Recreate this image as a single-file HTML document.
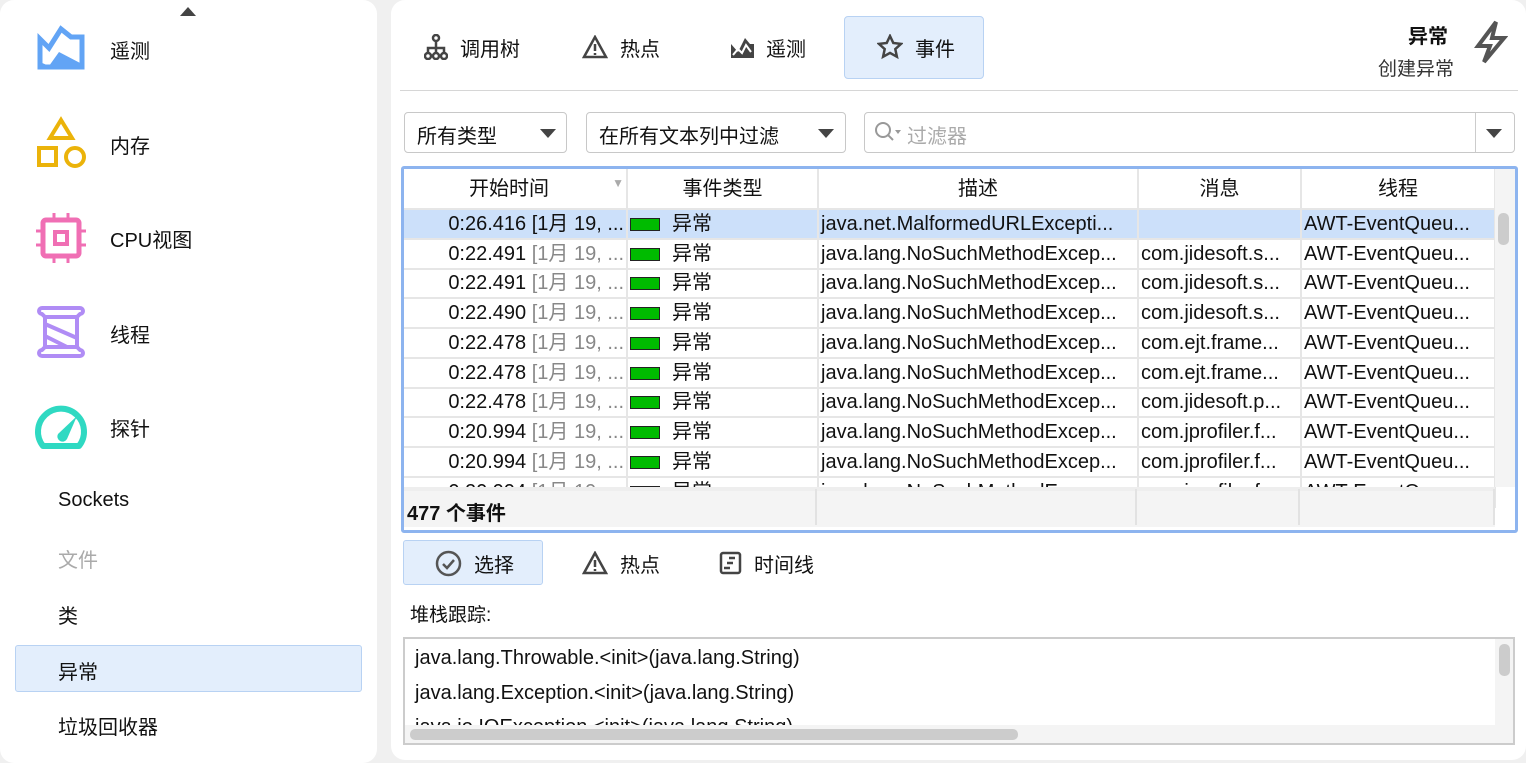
<!DOCTYPE html>
<html><head><meta charset="utf-8"><style>
*{box-sizing:border-box;margin:0;padding:0}
body{width:1526px;height:763px;background:#f0f0f0;font-family:"Liberation Sans","Noto Sans CJK SC",sans-serif;color:#111;position:relative;overflow:hidden;font-size:20px}
.abs{position:absolute}
.panel{position:absolute;background:#fff;border-radius:14px}
.nav{position:absolute;left:110px;font-size:20px}
.sub{position:absolute;left:58px;font-size:20px}
.tab{position:absolute;top:16px;height:62px;display:flex;align-items:center;font-size:20px}
.tab svg{margin-right:12px}
.dd{position:absolute;top:112px;height:41px;border:1px solid #c8c8c8;border-radius:4px;background:#fff;font-size:20px;padding:7px 12px}
.tri{position:absolute;width:0;height:0;border-left:8px solid transparent;border-right:8px solid transparent;border-top:9px solid #444}
table{border-collapse:collapse;table-layout:fixed;font-size:20px}
td{height:29.75px;border-right:2px solid #e6e6e6;border-bottom:2px solid #e6e6e6;white-space:nowrap;overflow:hidden;padding:0 2px;line-height:26px}
.g{color:#888}
.bar{display:inline-block;width:30px;height:13px;background:#00bb00;border:1px solid #222;vertical-align:-1px;margin-right:12px}
</style></head><body>
<div class="panel" style="left:0;top:0;width:377px;height:763px"></div>
<div class="panel" style="left:391px;top:0;width:1135px;height:760px"></div>

<div class="tri" style="left:180px;top:7px;border-top:none;border-bottom:9px solid #444"></div>
<svg class="abs" style="left:37px;top:24px" width="48" height="46"><path d="M3 15L12 24L24 5L34 13H45V43H3Z" fill="none" stroke="#62a4f5" stroke-width="5" stroke-linejoin="miter"/><path d="M3 38L12 42L22 28L45 40V45H3Z" fill="#62a4f5"/></svg>
<div class="nav" style="top:35px">遥测</div>
<svg class="abs" style="left:36px;top:116px" width="52" height="54" fill="none" stroke="#ebb30a" stroke-width="4"><path d="M25 4l11 18H14z"/><rect x="3" y="32" width="17" height="17"/><circle cx="39" cy="41" r="9"/></svg>
<div class="nav" style="top:130px">内存</div>
<svg class="abs" style="left:36px;top:213px" width="50" height="50" fill="none" stroke="#f06fb4" stroke-width="5"><rect x="7" y="7" width="36" height="36" rx="3"/><rect x="19" y="19" width="12" height="12" stroke-width="4"/><path d="M18 0v7M32 0v7M18 43v7M32 43v7M0 18h7M0 32h7M43 18h7M43 32h7" stroke-width="3"/></svg>
<div class="nav" style="top:224px">CPU视图</div>
<svg class="abs" style="left:37px;top:305px" width="48" height="54" fill="none" stroke="#b08cf5" stroke-width="4" stroke-linejoin="round"><path d="M5 3h38a3 3 0 0 1 0 6l-3 3v30l3 3a3 3 0 0 1 0 6H5a3 3 0 0 1 0-6l3-3V12L5 9a3 3 0 0 1 0-6z"/><path d="M8 12h32M8 42h32M8 19l32 14M8 31l22 11"/></svg>
<div class="nav" style="top:319px">线程</div>
<svg class="abs" style="left:34px;top:404px" width="54" height="45"><path d="M9 42A23 23 0 1 1 45 42Z" fill="none" stroke="#2fd9c2" stroke-width="6" stroke-linejoin="round"/><path d="M43 12L33 35a5 5 0 0 1-9-5z" fill="#2fd9c2"/></svg>
<div class="nav" style="top:413px">探针</div>
<div class="sub" style="top:489px">Sockets</div>
<div class="sub" style="top:544px;color:#aaa">文件</div>
<div class="sub" style="top:600px">类</div>
<div class="abs" style="left:15px;top:645px;width:347px;height:47px;background:#e3eefc;border:1px solid #b8d2f3;border-radius:3px"></div>
<div class="sub" style="top:656px">异常</div>
<div class="sub" style="top:711px">垃圾回收器</div>

<!-- tabs -->
<div class="tab" style="left:424px"><svg width="24" height="26" fill="none" stroke="#444" stroke-width="2.5"><circle cx="12" cy="4" r="3"/><path d="M12 7v7M4 20v-6h16v6M12 14v6"/><circle cx="4" cy="22" r="3"/><circle cx="12" cy="22" r="3"/><circle cx="20" cy="22" r="3"/></svg>调用树</div>
<div class="tab" style="left:582px"><svg width="26" height="24" fill="none" stroke="#444" stroke-width="2.5"><path d="M13 2L2 22h22z"/><path d="M13 9v7M13 18v2"/></svg>热点</div>
<div class="tab" style="left:730px"><svg width="24" height="22"><path d="M1 22V8l7 8 7-14 5 6h4v14z" fill="#444"/><path d="M3 19l5-6 4 4 4-8 5 7" fill="none" stroke="#fff" stroke-width="2"/></svg>遥测</div>
<div class="abs" style="left:844px;top:16px;width:140px;height:63px;background:#e3eefc;border:1px solid #b8d2f3;border-radius:4px"></div>
<div class="tab" style="left:877px"><svg width="26" height="26" fill="none" stroke="#444" stroke-width="2.5"><path d="M13 2l3.3 7 7.7.9-5.7 5.2 1.6 7.6L13 18.9l-6.9 3.8 1.6-7.6L2 9.9l7.7-.9z"/></svg>事件</div>
<div class="abs" style="left:1408px;top:20px;font-weight:bold;font-size:20px">异常</div>
<div class="abs" style="left:1378px;top:54px;font-size:19px;color:#333">创建异常</div>
<svg class="abs" style="left:1474px;top:20px" width="34" height="44" fill="none" stroke="#555" stroke-width="4" stroke-linejoin="miter"><path d="M22 2L4 26h12l-6 16 20-24H18z"/></svg>
<div class="abs" style="left:400px;top:90px;width:1118px;height:1px;background:#d6d6d6"></div>

<!-- filters -->
<div class="dd" style="left:404px;width:163px">所有类型</div><div class="tri" style="left:540px;top:129px"></div>
<div class="dd" style="left:586px;width:260px">在所有文本列中过滤</div><div class="tri" style="left:818px;top:129px"></div>
<div class="dd" style="left:864px;width:651px;color:#aaa;padding-left:42px">过滤器</div>
<svg class="abs" style="left:874px;top:121px" width="30" height="22" fill="none" stroke="#999" stroke-width="2"><circle cx="9" cy="9" r="7"/><path d="M14 14l5 5"/><path d="M21 9h6l-3 4z" fill="#999" stroke="none"/></svg>
<div class="abs" style="left:1475px;top:113px;width:1px;height:39px;background:#ccc"></div>
<div class="tri" style="left:1486px;top:129px"></div>

<!-- table -->
<div class="abs" style="left:401px;top:166px;width:1117px;height:367px;border:3px solid #8db4ef;border-radius:3px;background:#fff;overflow:hidden">
<table style="width:1091px">
<colgroup><col style="width:223px"><col style="width:191px"><col style="width:320px"><col style="width:163px"><col style="width:194px"></colgroup>
<tr style="text-align:center"><td style="height:40px">开始时间<span style="float:right;color:#aaa;font-size:12px;margin-top:-6px">▼</span></td><td>事件类型</td><td>描述</td><td>消息</td><td>线程</td></tr>
<tr style="background:#cce0fa"><td style="text-align:right">0:26.416 [1月 19, ...</td><td><span class="bar"></span>异常</td><td>java.net.MalformedURLExcepti...</td><td></td><td>AWT-EventQueu...</td></tr>
<tr><td style="text-align:right">0:22.491 <span class="g">[1月 19, ...</span></td><td><span class="bar"></span>异常</td><td>java.lang.NoSuchMethodExcep...</td><td>com.jidesoft.s...</td><td>AWT-EventQueu...</td></tr>
<tr><td style="text-align:right">0:22.491 <span class="g">[1月 19, ...</span></td><td><span class="bar"></span>异常</td><td>java.lang.NoSuchMethodExcep...</td><td>com.jidesoft.s...</td><td>AWT-EventQueu...</td></tr>
<tr><td style="text-align:right">0:22.490 <span class="g">[1月 19, ...</span></td><td><span class="bar"></span>异常</td><td>java.lang.NoSuchMethodExcep...</td><td>com.jidesoft.s...</td><td>AWT-EventQueu...</td></tr>
<tr><td style="text-align:right">0:22.478 <span class="g">[1月 19, ...</span></td><td><span class="bar"></span>异常</td><td>java.lang.NoSuchMethodExcep...</td><td>com.ejt.frame...</td><td>AWT-EventQueu...</td></tr>
<tr><td style="text-align:right">0:22.478 <span class="g">[1月 19, ...</span></td><td><span class="bar"></span>异常</td><td>java.lang.NoSuchMethodExcep...</td><td>com.ejt.frame...</td><td>AWT-EventQueu...</td></tr>
<tr><td style="text-align:right">0:22.478 <span class="g">[1月 19, ...</span></td><td><span class="bar"></span>异常</td><td>java.lang.NoSuchMethodExcep...</td><td>com.jidesoft.p...</td><td>AWT-EventQueu...</td></tr>
<tr><td style="text-align:right">0:20.994 <span class="g">[1月 19, ...</span></td><td><span class="bar"></span>异常</td><td>java.lang.NoSuchMethodExcep...</td><td>com.jprofiler.f...</td><td>AWT-EventQueu...</td></tr>
<tr><td style="text-align:right">0:20.994 <span class="g">[1月 19, ...</span></td><td><span class="bar"></span>异常</td><td>java.lang.NoSuchMethodExcep...</td><td>com.jprofiler.f...</td><td>AWT-EventQueu...</td></tr>
<tr><td style="text-align:right">0:20.994 <span class="g">[1月 19, ...</span></td><td><span class="bar"></span>异常</td><td>java.lang.NoSuchMethodExcep...</td><td>com.jprofiler.f...</td><td>AWT-EventQueu...</td></tr>
</table>
<div class="abs" style="left:0;top:318px;width:1091px;height:40px;background:#f4f4f4;border-top:4px solid #eee"></div>
<div class="abs" style="left:3px;top:328px;font-weight:bold;font-size:20px">477 个事件</div>
<div class="abs" style="left:411px;top:320px;width:2px;height:36px;background:#e2e2e2"></div>
<div class="abs" style="left:731px;top:320px;width:2px;height:36px;background:#e2e2e2"></div>
<div class="abs" style="left:894px;top:320px;width:2px;height:36px;background:#e2e2e2"></div>
<div class="abs" style="left:1089px;top:320px;width:2px;height:36px;background:#e2e2e2"></div>
<div class="abs" style="left:1091px;top:0;width:20px;height:318px;background:#f4f4f4"></div>
<div class="abs" style="left:1094px;top:44px;width:11px;height:32px;background:#ccc;border-radius:5px"></div>
</div>

<!-- bottom tabs -->
<div class="abs" style="left:403px;top:540px;width:140px;height:45px;background:#e3eefc;border:1px solid #b8d2f3;border-radius:3px"></div>
<div class="tab" style="left:435px;top:532px"><svg width="27" height="27" fill="none" stroke="#555" stroke-width="2.5"><circle cx="13.5" cy="13.5" r="11.5"/><path d="M8 14l4 4 7-8"/></svg>选择</div>
<div class="tab" style="left:582px;top:532px"><svg width="26" height="24" fill="none" stroke="#444" stroke-width="2.5"><path d="M13 2L2 22h22z"/><path d="M13 9v7M13 18v2"/></svg>热点</div>
<div class="tab" style="left:719px;top:532px"><svg width="23" height="24" fill="none" stroke="#444" stroke-width="2.5"><rect x="2" y="2" width="19" height="20" rx="2"/><path d="M10 7h6M8 12h6M5 17h6"/></svg>时间线</div>
<div class="abs" style="left:410px;top:600px;font-size:19px">堆栈跟踪:</div>

<div class="abs" style="left:403px;top:637px;width:1112px;height:108px;border:2px solid #ccc;background:#fff;overflow:hidden;font-size:20px">
<div class="abs" style="left:10px;top:8px">java.lang.Throwable.&lt;init&gt;(java.lang.String)</div>
<div class="abs" style="left:10px;top:43px">java.lang.Exception.&lt;init&gt;(java.lang.String)</div>
<div class="abs" style="left:10px;top:77px">java.io.IOException.&lt;init&gt;(java.lang.String)</div>
<div class="abs" style="left:0;top:86px;width:1110px;height:20px;background:#f4f4f4"></div>
<div class="abs" style="left:5px;top:90px;width:608px;height:11px;background:#ccc;border-radius:5px"></div>
<div class="abs" style="left:1090px;top:0;width:20px;height:86px;background:#f4f4f4"></div>
<div class="abs" style="left:1094px;top:5px;width:11px;height:32px;background:#ccc;border-radius:5px"></div>
</div>
</body></html>
